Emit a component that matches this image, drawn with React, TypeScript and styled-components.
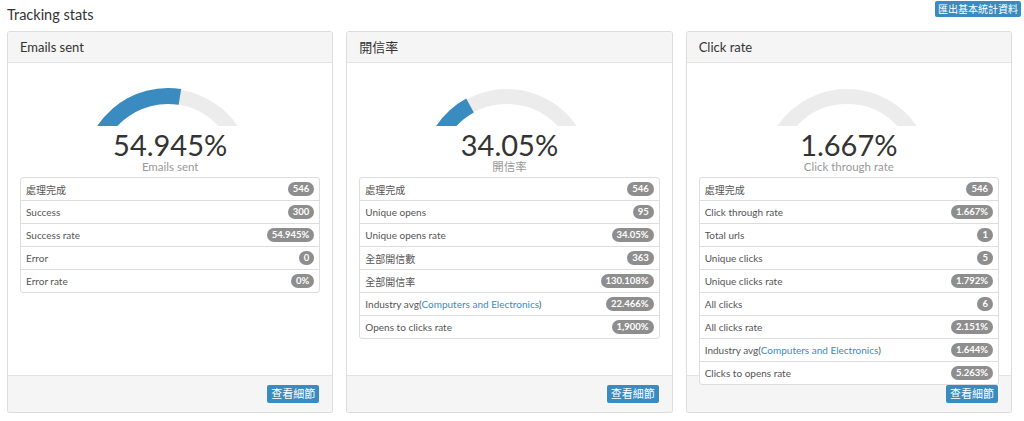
import styled, { createGlobalStyle } from "styled-components";

const GlobalStyle = createGlobalStyle`
  body {
    margin: 0;
    background: #fff;
    font-family: Lato, "Noto Sans CJK TC", sans-serif;
    color: #333;
  }
`;

interface IRow {
  label: string;
  value: string;
  link?: string;
}

interface IStat {
  title: string;
  value: number;
  caption: string;
  rows: IRow[];
}

const INDUSTRY = "Computers and Electronics";

const stats: IStat[] = [
  {
    title: "Emails sent",
    value: 54.945,
    caption: "Emails sent",
    rows: [
      { label: "處理完成", value: "546" },
      { label: "Success", value: "300" },
      { label: "Success rate", value: "54.945%" },
      { label: "Error", value: "0" },
      { label: "Error rate", value: "0%" },
    ],
  },
  {
    title: "開信率",
    value: 34.05,
    caption: "開信率",
    rows: [
      { label: "處理完成", value: "546" },
      { label: "Unique opens", value: "95" },
      { label: "Unique opens rate", value: "34.05%" },
      { label: "全部開信數", value: "363" },
      { label: "全部開信率", value: "130.108%" },
      { label: "Industry avg", link: INDUSTRY, value: "22.466%" },
      { label: "Opens to clicks rate", value: "1,900%" },
    ],
  },
  {
    title: "Click rate",
    value: 1.667,
    caption: "Click through rate",
    rows: [
      { label: "處理完成", value: "546" },
      { label: "Click through rate", value: "1.667%" },
      { label: "Total urls", value: "1" },
      { label: "Unique clicks", value: "5" },
      { label: "Unique clicks rate", value: "1.792%" },
      { label: "All clicks", value: "6" },
      { label: "All clicks rate", value: "2.151%" },
      { label: "Industry avg", link: INDUSTRY, value: "1.644%" },
      { label: "Clicks to opens rate", value: "5.263%" },
    ],
  },
];

// gauge geometry (svg local coords)
const CX = 148;
const CY = 87;

const arcPath = (r: number, fraction: number) => {
  const a = Math.PI * (1 - fraction);
  const x = CX + r * Math.cos(a);
  const y = CY - r * Math.sin(a);
  return `M ${CX - r} ${CY} A ${r} ${r} 0 0 1 ${x.toFixed(2)} ${y.toFixed(2)}`;
};

const Gauge = ({ value }: { value: number }) => (
  <GaugeSvg width="300" height="40" viewBox="0 0 300 40">
    <path d={arcPath(76.5, 1)} fill="none" stroke="#ececec" strokeWidth="15" />
    {value > 0 && (
      <path d={arcPath(77, value / 100)} fill="none" stroke="#3a8bbf" strokeWidth="16" />
    )}
  </GaugeSvg>
);

const StatPanel = ({ stat }: { stat: IStat }) => (
  <Panel>
    <PanelHeading>{stat.title}</PanelHeading>
    <PanelBody>
      <Gauge value={stat.value} />
      <BigValue>{stat.value}%</BigValue>
      <Caption>{stat.caption}</Caption>
      <List>
        {stat.rows.map((row) => (
          <ListItem key={row.label}>
            <span>
              {row.label}
              {row.link && (
                <>
                  (<Link>{row.link}</Link>)
                </>
              )}
            </span>
            <Badge>{row.value}</Badge>
          </ListItem>
        ))}
      </List>
    </PanelBody>
    <PanelFooter>
      <Button>查看細節</Button>
    </PanelFooter>
  </Panel>
);

export default function App() {
  return (
    <>
      <GlobalStyle />
      <TopBar>
        <PageTitle>Tracking stats</PageTitle>
        <ExportButton>匯出基本統計資料</ExportButton>
      </TopBar>
      <Grid>
        {stats.map((s) => (
          <StatPanel key={s.title} stat={s} />
        ))}
      </Grid>
    </>
  );
}

const TopBar = styled.div`
  display: flex;
  justify-content: space-between;
  align-items: flex-start;
  height: 31px;
  padding: 1px 3px 0 7px;
  box-sizing: border-box;
`;

const PageTitle = styled.h3`
  margin: 5px 0 0;
  font-size: 14.5px;
  font-weight: 400;
  line-height: 18px;
  color: #333;
`;

const Button = styled.button`
  border: none;
  border-radius: 2px;
  background: #3a8bbf;
  color: #fff;
  font-family: inherit;
  font-size: 11px;
  height: 18px;
  line-height: 18px;
  padding: 0 4px;
  cursor: pointer;
`;

const ExportButton = styled(Button)`
  height: 16px;
  line-height: 16px;
  padding: 0 3px;
  font-size: 10px;
`;

const Grid = styled.div`
  display: grid;
  grid-template-columns: repeat(3, 1fr);
  gap: 13px;
  padding: 0 12px 0 7px;
`;

const Panel = styled.div`
  height: 382px;
  box-sizing: border-box;
  border: 1px solid #ddd;
  border-radius: 3px;
  box-shadow: 0 1px 1px rgba(0, 0, 0, 0.05);
  display: flex;
  flex-direction: column;
  background: #fff;
`;

const PanelHeading = styled.div`
  height: 31px;
  box-sizing: border-box;
  padding: 0 12px;
  line-height: 30px;
  font-size: 13px;
  background: #f5f5f5;
  border-bottom: 1px solid #e3e3e3;
  border-radius: 3px 3px 0 0;
  color: #333;
`;

const PanelBody = styled.div`
  flex: 1;
  min-height: 0;
  padding: 23px 12px 0;
  display: flex;
  flex-direction: column;
  align-items: center;
`;

const GaugeSvg = styled.svg`
  display: block;
  flex: none;
`;

const BigValue = styled.div`
  margin-top: 4px;
  font-size: 29px;
  line-height: 30px;
  color: #333;
`;

const Caption = styled.div`
  margin-top: 1px;
  font-size: 11.5px;
  line-height: 12px;
  color: #999;
`;

const List = styled.div`
  align-self: stretch;
  margin-top: 4px;
  flex: none;
`;

const ListItem = styled.div`
  position: relative;
  box-sizing: border-box;
  display: flex;
  align-items: center;
  justify-content: space-between;
  height: 24px;
  padding: 0 5px;
  font-size: 10px;
  color: #555;
  background: #fff;
  border: 1px solid #ddd;
  margin-bottom: -1px;

  &:first-child {
    border-radius: 3px 3px 0 0;
  }
  &:last-child {
    border-radius: 0 0 3px 3px;
    margin-bottom: 0;
  }
`;

const Link = styled.span`
  color: #3a8bbf;
`;

const Badge = styled.span`
  display: inline-block;
  min-width: 14px;
  height: 14px;
  line-height: 14px;
  padding: 0 5px;
  border-radius: 7px;
  background: #8e8e8e;
  color: #fff;
  font-size: 9.5px;
  font-weight: 700;
  text-align: center;
  box-sizing: border-box;
`;

const PanelFooter = styled.div`
  height: 37px;
  box-sizing: border-box;
  flex: none;
  display: flex;
  justify-content: flex-end;
  align-items: center;
  padding: 0 13px;
  background: #f5f5f5;
  border-top: 1px solid #e3e3e3;
  border-radius: 0 0 3px 3px;
`;
